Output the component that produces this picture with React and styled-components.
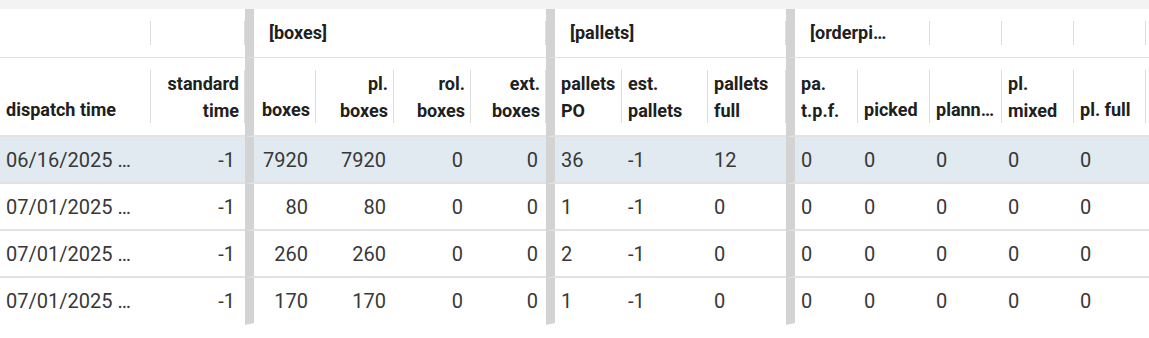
import React from 'react';
import styled, { createGlobalStyle } from 'styled-components';

const Global = createGlobalStyle`
  html, body { margin: 0; padding: 0; background: #fff; }
  body { font-family: Roboto, "Liberation Sans", Arial, sans-serif; }
  * { box-sizing: border-box; }
`;

const BAR = '#d3d3d3';
const LINE = '#e2e2e2';
const SEP = '#dddddd';

const columns = [
  { label: 'dispatch time', width: 151, align: 'left', padRight: 14 },
  { label: 'standard time', width: 94, align: 'right', padRight: 10 },
  { label: 'boxes', width: 71, align: 'right', bar: true },
  { label: 'pl. boxes', width: 78, align: 'right' },
  { label: 'rol. boxes', width: 77, align: 'right' },
  { label: 'ext. boxes', width: 75, align: 'right' },
  { label: 'pallets PO', width: 76, align: 'left', bar: true },
  { label: 'est. pallets', width: 86, align: 'left' },
  { label: 'pallets full', width: 78, align: 'left' },
  { label: 'pa. t.p.f.', width: 72, align: 'left', bar: true },
  { label: 'picked', width: 72, align: 'left' },
  { label: 'planned', width: 72, align: 'left', nowrap: true },
  { label: 'pl. mixed', width: 72, align: 'left' },
  { label: 'pl. full', width: 72, align: 'left' },
];

const groups = [
  { label: '', width: 151 },
  { label: '', width: 94 },
  { label: '[boxes]', width: 301, bar: true },
  { label: '[pallets]', width: 240, bar: true },
  { label: '[orderpicking]', width: 144, bar: true },
  { label: '', width: 72 },
  { label: '', width: 72 },
  { label: '', width: 72 },
];

const rows = [
  ['06/16/2025 10:00', '-1', '7920', '7920', '0', '0', '36', '-1', '12', '0', '0', '0', '0', '0'],
  ['07/01/2025 10:00', '-1', '80', '80', '0', '0', '1', '-1', '0', '0', '0', '0', '0', '0'],
  ['07/01/2025 10:00', '-1', '260', '260', '0', '0', '2', '-1', '0', '0', '0', '0', '0', '0'],
  ['07/01/2025 10:00', '-1', '170', '170', '0', '0', '1', '-1', '0', '0', '0', '0', '0', '0'],
];

const Grid = styled.div`
  width: 100%;
  overflow: hidden;
`;

const TopStrip = styled.div`
  height: 9px;
  background: #f3f3f3;
`;

const Row = styled.div`
  display: flex;
  width: 100%;
  background: ${p => (p.$selected ? '#e1eaf0' : '#fff')};
`;

const GroupCell = styled.div`
  flex: ${p => (p.$fill ? '1 1 auto' : `0 0 ${p.$w}px`)};
  width: ${p => (p.$fill ? 'auto' : `${p.$w}px`)};
  height: 49px;
  padding: 12px 0;
  border-left: ${p => (p.$bar ? `9px solid ${BAR}` : 'none')};
  border-bottom: 1px solid ${LINE};
  display: flex;
`;

const GroupLabel = styled.div`
  flex: 1;
  min-width: 0;
  border-right: ${p => (p.$fill ? 'none' : `1px solid ${SEP}`)};
  padding: 0 40px 0 15px;
  font-size: 18px;
  font-weight: 700;
  line-height: 24px;
  color: #202020;
  white-space: nowrap;
  overflow: hidden;
  text-overflow: ellipsis;
`;

const HeadCell = styled.div`
  flex: ${p => (p.$fill ? '1 1 auto' : `0 0 ${p.$w}px`)};
  width: ${p => (p.$fill ? 'auto' : `${p.$w}px`)};
  height: 79px;
  padding: 12px 0;
  border-left: ${p => (p.$bar ? `9px solid ${BAR}` : 'none')};
  border-bottom: 2px solid ${LINE};
  display: flex;
`;

const HeadLabel = styled.div`
  flex: 1;
  min-width: 0;
  display: flex;
  flex-direction: column;
  justify-content: flex-end;
  border-right: ${p => (p.$fill ? 'none' : `1px solid ${SEP}`)};
  padding: 0 5px 0 6px;
  text-align: ${p => p.$align};
  font-size: 18px;
  font-weight: 700;
  line-height: 27px;
  color: #202020;
  overflow: hidden;
`;

const HeadText = styled.span`
  display: block;
  white-space: ${p => (p.$nowrap ? 'nowrap' : 'normal')};
  overflow: hidden;
  text-overflow: ellipsis;
`;

const Cell = styled.div`
  flex: ${p => (p.$fill ? '1 1 auto' : `0 0 ${p.$w}px`)};
  width: ${p => (p.$fill ? 'auto' : `${p.$w}px`)};
  height: 47px;
  padding: 0 ${p => p.$padRight ?? 8}px 0 6px;
  border-left: ${p => (p.$bar ? `9px solid ${BAR}` : 'none')};
  border-bottom: 2px solid ${p => (p.$last ? 'transparent' : LINE)};
  display: flex;
  align-items: center;
  justify-content: ${p => (p.$align === 'right' ? 'flex-end' : 'flex-start')};
  font-size: 20px;
  font-weight: 400;
  color: #383838;
  white-space: nowrap;
  overflow: hidden;
`;

const CellText = styled.span`
  display: block;
  max-width: 100%;
  overflow: hidden;
  text-overflow: ellipsis;
  white-space: nowrap;
`;

export default function App() {
  return (
    <>
      <Global />
      <Grid>
        <TopStrip />
        <Row>
          {groups.map((g, i) => (
            <GroupCell key={i} $w={g.width} $bar={g.bar}>
              <GroupLabel>{g.label}</GroupLabel>
            </GroupCell>
          ))}
          <GroupCell $fill>
            <GroupLabel $fill />
          </GroupCell>
        </Row>
        <Row>
          {columns.map((c, i) => (
            <HeadCell key={i} $w={c.width} $bar={c.bar}>
              <HeadLabel $align={c.align}>
                <HeadText $nowrap={c.nowrap}>{c.label}</HeadText>
              </HeadLabel>
            </HeadCell>
          ))}
          <HeadCell $fill>
            <HeadLabel $fill />
          </HeadCell>
        </Row>
        {rows.map((r, ri) => (
          <Row key={ri} $selected={ri === 0}>
            {columns.map((c, ci) => (
              <Cell
                key={ci}
                $w={c.width}
                $bar={c.bar}
                $align={c.align}
                $padRight={c.padRight}
                $last={ri === rows.length - 1}
              >
                <CellText>{r[ci]}</CellText>
              </Cell>
            ))}
            <Cell $fill $last={ri === rows.length - 1} />
          </Row>
        ))}
      </Grid>
    </>
  );
}
